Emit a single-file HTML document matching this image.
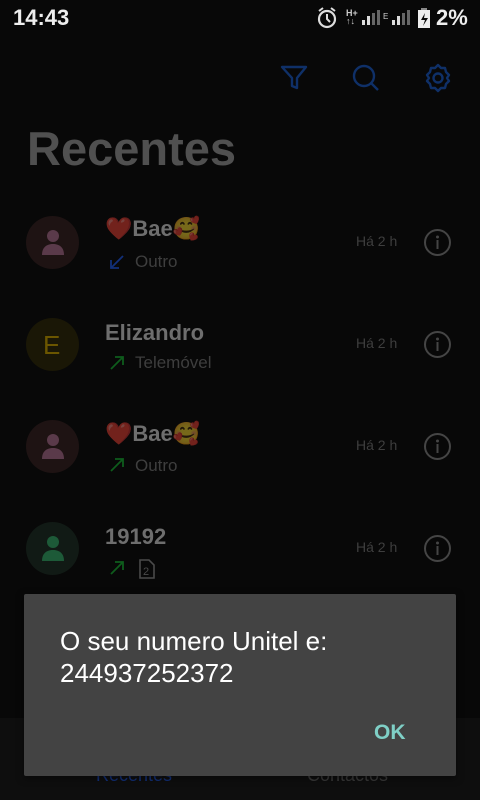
<!DOCTYPE html>
<html><head><meta charset="utf-8"><style>
*{margin:0;padding:0;box-sizing:border-box}
body{width:480px;height:800px;background:#080808;font-family:"Liberation Sans",sans-serif;position:relative;overflow:hidden;color:#fff}
.abs{position:absolute}
.name{position:absolute;left:105px;font-size:22px;font-weight:bold;color:#6e6e6e}
.em{opacity:.45}
.sub{position:absolute;left:135px;font-size:17px;color:#3e3e3e}
.time{position:absolute;left:356px;font-size:14px;color:#3e3e3e}
.av{position:absolute;left:26px;width:53px;height:53px;border-radius:50%}
.info{position:absolute;left:424px;width:27px;height:27px}
</style></head><body>
<div class="abs" style="left:13px;top:5px;font-size:22px;font-weight:bold;color:#eee">14:43</div>
<svg class="abs" style="left:316px;top:7px" width="24" height="22" viewBox="0 0 24 22"><circle cx="11" cy="12" r="8" fill="none" stroke="#ddd" stroke-width="2.2"/><path d="M11 7v5l3 3M3 4l4-3M19 4l-4-3" stroke="#ddd" stroke-width="2" fill="none"/></svg>
<div class="abs" style="left:346px;top:9px;font-size:9px;color:#ccc;font-weight:bold;line-height:8px">H+<br>↑↓</div>
<svg class="abs" style="left:362px;top:10px" width="20" height="16"><rect x="0" y="10" width="3" height="5" fill="#ddd"/><rect x="5" y="6" width="3" height="9" fill="#ddd"/><rect x="10" y="3" width="3" height="12" fill="#666"/><rect x="15" y="0" width="3" height="15" fill="#666"/></svg>
<div class="abs" style="left:383px;top:12px;font-size:8px;color:#ccc">E</div>
<svg class="abs" style="left:392px;top:10px" width="20" height="16"><rect x="0" y="10" width="3" height="5" fill="#ddd"/><rect x="5" y="6" width="3" height="9" fill="#ddd"/><rect x="10" y="3" width="3" height="12" fill="#666"/><rect x="15" y="0" width="3" height="15" fill="#666"/></svg>
<svg class="abs" style="left:418px;top:8px" width="12" height="20"><rect x="3" y="0" width="6" height="3" fill="#888"/><rect x="0" y="2" width="12" height="18" fill="#eee"/><path d="M7 5l-4 7h4l-2 6 5-8H6z" fill="#080808"/></svg>
<div class="abs" style="left:436px;top:5px;font-size:22px;font-weight:bold;color:#eee">2%</div>
<svg class="abs" style="left:280px;top:64px" width="28" height="28" viewBox="0 0 28 28"><path d="M2 3h24l-9 11v10l-5-2V14z" fill="none" stroke="#0f3068" stroke-width="2.4" stroke-linejoin="round"/></svg>
<svg class="abs" style="left:352px;top:64px" width="28" height="28" viewBox="0 0 28 28"><circle cx="12" cy="12" r="10" fill="none" stroke="#0f3068" stroke-width="2.4"/><path d="M19 19l7 7" stroke="#0f3068" stroke-width="2.4"/></svg>
<svg class="abs" style="left:422px;top:62px" width="32" height="32" viewBox="0 0 32 32"><path d="M16 3l3 3h4l1 4 3 3-2 3 2 3-3 3-1 4h-4l-3 3-3-3H9l-1-4-3-3 2-3-2-3 3-3 1-4h4z" fill="none" stroke="#0f3068" stroke-width="2.4" stroke-linejoin="round"/><circle cx="16" cy="16" r="4.5" fill="none" stroke="#0f3068" stroke-width="2.4"/></svg>
<div class="abs" style="left:27px;top:121px;font-size:47px;font-weight:bold;color:#505050">Recentes</div>

<svg width="0" height="0" style="position:absolute"><defs>
<g id="inf"><circle cx="13.5" cy="13.5" r="12.5" fill="none" stroke="#454545" stroke-width="2"/><circle cx="13.5" cy="8" r="1.5" fill="#454545"/><rect x="12.5" y="11" width="2" height="9" fill="#454545"/></g>
</defs></svg>

<div class="av" style="top:216px;background:#1e1313"></div>
<svg class="abs" style="left:40px;top:228px" width="26" height="28"><circle cx="13" cy="8" r="6" fill="#5a3a4a"/><path d="M2 27c0-8 5-11 11-11s11 3 11 11z" fill="#5a3a4a"/></svg>
<div class="name" style="top:216px"><span class="em">❤️</span>Bae<span class="em">🥰</span></div>
<svg class="abs" style="left:109px;top:254px" width="16" height="16"><path d="M14 2L2 14M2 6v8h8" fill="none" stroke="#12307a" stroke-width="1.8"/></svg>
<div class="sub" style="top:252px">Outro</div>
<div class="time" style="top:233px">Há 2 h</div>
<svg class="info" style="top:229px"><use href="#inf"/></svg>

<div class="av" style="top:318px;background:#1a1706"></div>
<div class="abs" style="left:43px;top:330px;font-size:26px;color:#6b5600">E</div>
<div class="name" style="top:320px">Elizandro</div>
<svg class="abs" style="left:109px;top:355px" width="16" height="16"><path d="M2 14L14 2M6 2h8v8" fill="none" stroke="#0e5c1c" stroke-width="1.8"/></svg>
<div class="sub" style="top:353px">Telemóvel</div>
<div class="time" style="top:335px">Há 2 h</div>
<svg class="info" style="top:331px"><use href="#inf"/></svg>

<div class="av" style="top:420px;background:#1e1313"></div>
<svg class="abs" style="left:40px;top:432px" width="26" height="28"><circle cx="13" cy="8" r="6" fill="#5a3a4a"/><path d="M2 27c0-8 5-11 11-11s11 3 11 11z" fill="#5a3a4a"/></svg>
<div class="name" style="top:421px"><span class="em">❤️</span>Bae<span class="em">🥰</span></div>
<svg class="abs" style="left:109px;top:457px" width="16" height="16"><path d="M2 14L14 2M6 2h8v8" fill="none" stroke="#0e5c1c" stroke-width="1.8"/></svg>
<div class="sub" style="top:456px">Outro</div>
<div class="time" style="top:437px">Há 2 h</div>
<svg class="info" style="top:433px"><use href="#inf"/></svg>

<div class="av" style="top:522px;background:#111a15"></div>
<svg class="abs" style="left:40px;top:534px" width="26" height="28"><circle cx="13" cy="8" r="6" fill="#1d5a38"/><path d="M2 27c0-8 5-11 11-11s11 3 11 11z" fill="#1d5a38"/></svg>
<div class="name" style="top:524px">19192</div>
<svg class="abs" style="left:109px;top:560px" width="16" height="16"><path d="M2 14L14 2M6 2h8v8" fill="none" stroke="#0e5c1c" stroke-width="1.8"/></svg>
<svg class="abs" style="left:139px;top:559px" width="16" height="20"><path d="M1 1h9l5 5v13H1z" fill="none" stroke="#4a4a4a" stroke-width="1.6"/><text x="4" y="16" font-size="11" fill="#4a4a4a" font-family="Liberation Sans">2</text></svg>
<div class="time" style="top:539px">Há 2 h</div>
<svg class="info" style="top:535px"><use href="#inf"/></svg>

<div class="abs" style="left:0;top:718px;width:480px;height:82px;background:#0e0e0e"></div>
<div class="abs" style="left:96px;top:765px;font-size:18px;color:#12307a">Recentes</div>
<div class="abs" style="left:307px;top:765px;font-size:18px;color:#3a3a3a">Contactos</div>

<div class="abs" style="left:24px;top:594px;width:432px;height:182px;background:#434343;border-radius:2px;box-shadow:0 2px 8px rgba(0,0,0,.5)"></div>
<div class="abs" style="left:60px;top:625px;font-size:26px;line-height:32px;color:#fff">O seu numero Unitel e:<br>244937252372</div>
<div class="abs" style="left:374px;top:721px;font-size:21px;font-weight:bold;color:#7fcfc6">OK</div>
</body></html>
